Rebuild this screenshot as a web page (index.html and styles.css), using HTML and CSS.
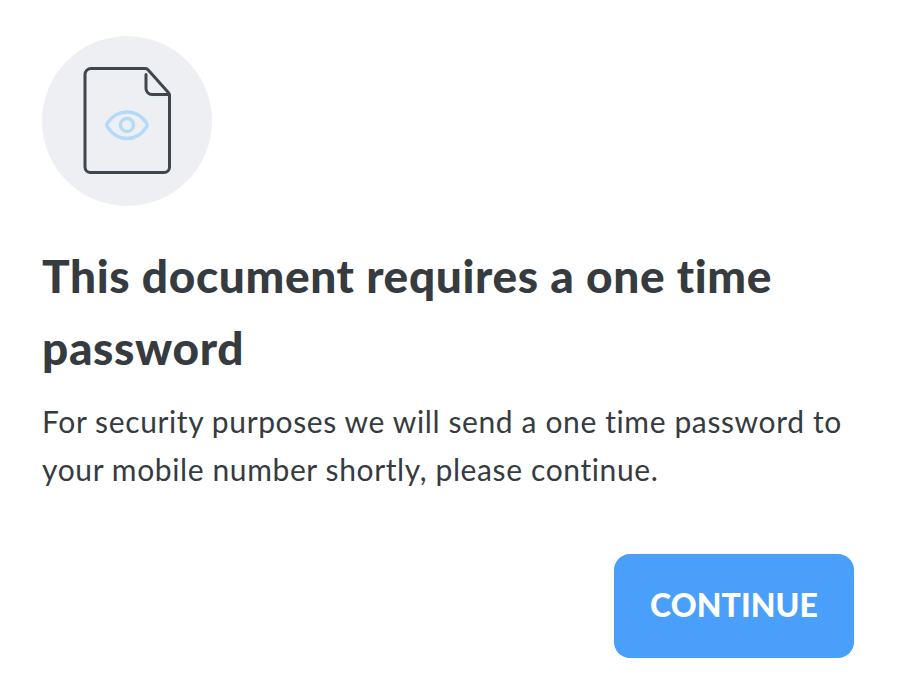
FILE: index.html
```html
<!DOCTYPE html>
<html lang="en">
<head>
<meta charset="utf-8">
<title>One time password</title>
<link rel="stylesheet" href="styles.css">
</head>
<body>
<main class="dialog">
  <div class="badge">
    <svg class="doc-icon" viewBox="0 0 88 108" width="88" height="108" fill="none">
      <path class="fold-shadow" d="M66 29.500H85V31H70Z"/>
      <path class="doc-line" d="M8 1.500H62.500Q64 1.500 65 2.700L85.300 25.500Q86.500 27 86.500 28.500V100a5.500 5.500 0 0 1-5.500 5.500H7.500a5.500 5.500 0 0 1-5.500-5.500V7.500a6 6 0 0 1 6-6Z"/>
      <path class="doc-line" d="M63 7.500V21.500a6 6 0 0 0 6 6H86"/>
      <path class="eye-line" d="M24.500 56C29 49 36 45 44 45S59 49 63.500 56Q64.800 58 63.500 60C59 67 52 71.500 44 71.500S29 67 24.500 60Q23.200 58 24.500 56Z"/>
      <circle class="eye-line" cx="44" cy="58" r="6.500"/>
    </svg>
  </div>
  <h1 class="title">This document requires a one time password</h1>
  <p class="body-text">For security purposes we will send a one time password to your mobile number shortly, please continue.</p>
  <div class="actions"><button class="continue">CONTINUE</button></div>
</main>
</body>
</html>
```
FILE: styles.css
```css
html, body { margin: 0; padding: 0; background: #fff; }
body { font-family: "Lato", "Liberation Sans", sans-serif; color: #363b40; font-variant-ligatures: none; }
.dialog { width: 812px; padding: 36px 44px 28px 42px; }
.badge { width: 170px; height: 170px; border-radius: 50%; background: #eeeff3; display: flex; align-items: center; justify-content: center; }
.doc-icon { display: block; }
.doc-line { stroke: #3f464d; stroke-width: 3; stroke-linecap: round; stroke-linejoin: round; }
.eye-line { stroke: #b5daf8; stroke-width: 3.400; }
.fold-shadow { fill: #dcebf8; }
.title { margin: 34px 0 0; font-size: 46px; line-height: 72px; font-weight: 900; letter-spacing: 0.63px; }
.body-text { margin: 13px 0 0; font-size: 30px; line-height: 48px; font-weight: 400; letter-spacing: 0.62px; }
.actions { display: flex; justify-content: flex-end; margin-top: 61px; }
.continue { width: 240px; height: 104px; padding: 0 0 3px; border: 0; border-radius: 16px; background: #4a9ffa; color: #fff; font: 900 32px "Lato", "Liberation Sans", sans-serif; letter-spacing: 0.1px; }
```
